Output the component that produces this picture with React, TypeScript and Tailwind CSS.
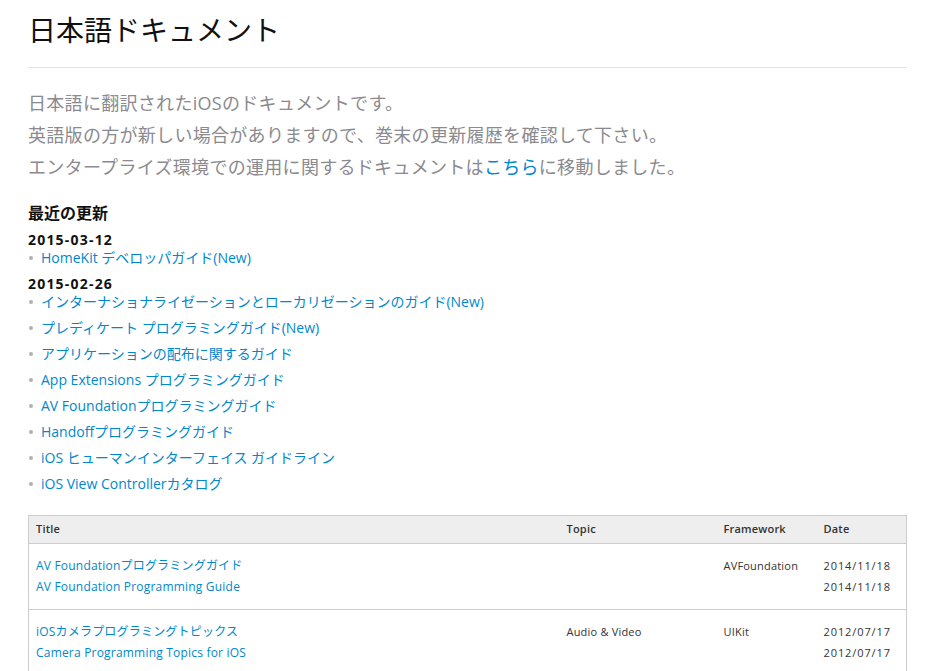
const jp = "font-['Open_Sans','Noto_Sans_CJK_JP',sans-serif]";

const updates = [
  { date: "2015-03-12", items: ["HomeKit デベロッパガイド(New)"] },
  {
    date: "2015-02-26",
    items: [
      "インターナショナライゼーションとローカリゼーションのガイド(New)",
      "プレディケート プログラミングガイド(New)",
      "アプリケーションの配布に関するガイド",
      "App Extensions プログラミングガイド",
      "AV Foundationプログラミングガイド",
      "Handoffプログラミングガイド",
      "iOS ヒューマンインターフェイス ガイドライン",
      "iOS View Controllerカタログ",
    ],
  },
];

const docs = [
  {
    ja: "AV Foundationプログラミングガイド",
    en: "AV Foundation Programming Guide",
    topic: "",
    framework: "AVFoundation",
    dates: ["2014/11/18", "2014/11/18"],
  },
  {
    ja: "iOSカメラプログラミングトピックス",
    en: "Camera Programming Topics for iOS",
    topic: "Audio & Video",
    framework: "UIKit",
    dates: ["2012/07/17", "2012/07/17"],
  },
];

export default function App() {
  return (
    <div className={`${jp} bg-white min-h-screen px-7 text-[#111]`}>
      <h1 className="pt-3 text-[28px] leading-9 font-normal">日本語ドキュメント</h1>
      <hr className="mt-[19px] border-0 h-px bg-[#e3e3e3]" />

      <div className="mt-[19px] text-[18px] leading-8 text-[#8a8a8f] tracking-[0.3px]">
        <p>日本語に翻訳されたiOSのドキュメントです。</p>
        <p>英語版の方が新しい場合がありますので、巻末の更新履歴を確認して下さい。</p>
        <p>
          エンタープライズ環境での運用に関するドキュメントは
          <a href="#" className="text-[#0088cc]">こちら</a>
          に移動しました。
        </p>
      </div>

      <h2 className="mt-[19px] text-[16px] leading-[22px] font-bold">最近の更新</h2>
      <div className="mt-[7px]">
        {updates.map((u) => (
          <div key={u.date}>
            <div className="text-[14px] leading-[18px] font-bold tracking-[1.2px]">{u.date}</div>
            <ul>
              {u.items.map((it) => (
                <li key={it} className="flex items-center text-[14px] leading-[18px] mb-2">
                  <span className="w-[4px] h-[4px] rounded-full bg-[#b0b0b0] ml-[1px] mr-[8px]" />
                  <a href="#" className="text-[#0088cc]">{it}</a>
                </li>
              ))}
            </ul>
          </div>
        ))}
      </div>

      <table className="mt-[22px] w-full table-fixed border-collapse border border-[#cccccc] text-[12px] tracking-[0.2px]">
        <colgroup>
          <col className="w-[530px]" />
          <col className="w-[157px]" />
          <col className="w-[100px]" />
          <col />
        </colgroup>
        <thead>
          <tr className="bg-[#eeeeee] text-left text-[11px] text-[#333] font-semibold">
            <th className="h-[28px] pl-[7px] pr-2 font-semibold">Title</th>
            <th className="px-2 font-semibold">Topic</th>
            <th className="px-2 font-semibold">Framework</th>
            <th className="px-2 font-semibold">Date</th>
          </tr>
        </thead>
        <tbody>
          {docs.map((d) => (
            <tr key={d.en} className="border-t border-[#cccccc] align-top">
              <td className="pl-[7px] pr-2 pt-[11px] pb-[12px] leading-[21px]">
                <a href="#" className="block text-[#0088cc]">{d.ja}</a>
                <a href="#" className="block text-[#0088cc]">{d.en}</a>
              </td>
              <td className="px-2 pt-[11px] leading-[21px] text-[11px] text-[#333]">{d.topic}</td>
              <td className="px-2 pt-[11px] leading-[21px] text-[11px] text-[#333]">{d.framework}</td>
              <td className="px-2 pt-[11px] leading-[21px] text-[11px] text-[#333] tracking-[0.9px]">
                {d.dates.map((x, i) => (
                  <div key={i}>{x}</div>
                ))}
              </td>
            </tr>
          ))}
        </tbody>
      </table>
    </div>
  );
}
